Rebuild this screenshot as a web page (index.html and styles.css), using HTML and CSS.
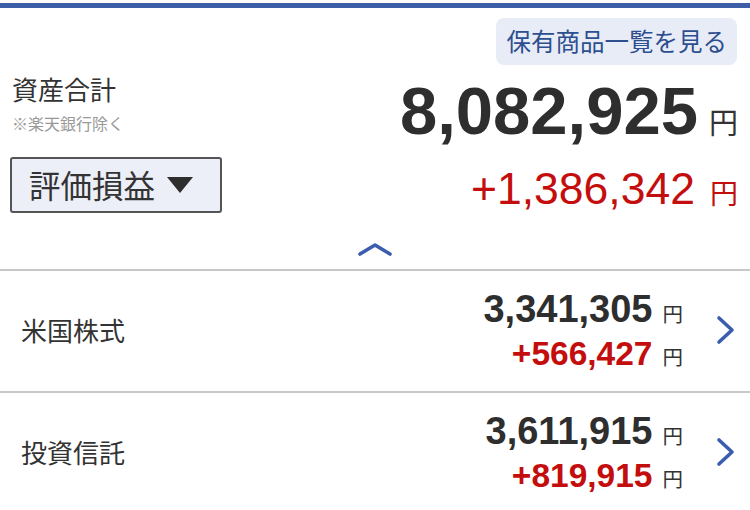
FILE: index.html
```html
<!DOCTYPE html>
<html lang="ja">
<head>
<meta charset="utf-8">
<link rel="stylesheet" href="styles.css">
</head>
<body>
<div class="topbar"></div>
<section class="summary">
  <div class="actions">
    <a class="btn-list">保有商品一覧を見る</a>
  </div>
  <div class="total-row">
    <div class="label">
      <div class="title">資産合計</div>
      <div class="note">※楽天銀行除く</div>
    </div>
    <div class="total"><span class="num">8,082,925</span><span class="yen">円</span></div>
  </div>
  <div class="pl-row">
    <div class="select"><span class="select-text">評価損益</span><span class="tri"></span></div>
    <div class="pl"><span class="num">+1,386,342</span><span class="yen">円</span></div>
  </div>
  <div class="collapse">
    <svg width="34" height="14" viewBox="0 0 34 14"><path d="M2 12 L17 3 L32 12" fill="none" stroke="#3a5dae" stroke-width="3.6" stroke-linecap="round" stroke-linejoin="round"/></svg>
  </div>
</section>
<ul class="list">
  <li class="row">
    <div class="row-name">米国株式</div>
    <div class="amounts">
      <div class="val"><span class="num">3,341,305</span><span class="yen">円</span></div>
      <div class="gain"><span class="num">+566,427</span><span class="yen">円</span></div>
    </div>
    <svg class="chev" width="20" height="30" viewBox="0 0 20 30"><path d="M3 3 L16 15 L3 27" fill="none" stroke="#3a5dae" stroke-width="3.6" stroke-linecap="round" stroke-linejoin="round"/></svg>
  </li>
  <li class="row">
    <div class="row-name">投資信託</div>
    <div class="amounts">
      <div class="val"><span class="num">3,611,915</span><span class="yen">円</span></div>
      <div class="gain"><span class="num">+819,915</span><span class="yen">円</span></div>
    </div>
    <svg class="chev" width="20" height="30" viewBox="0 0 20 30"><path d="M3 3 L16 15 L3 27" fill="none" stroke="#3a5dae" stroke-width="3.6" stroke-linecap="round" stroke-linejoin="round"/></svg>
  </li>
</ul>
</body>
</html>
```

FILE: styles.css
```css
* { box-sizing: border-box; }
html, body { margin: 0; padding: 0; background: #fff; }
body {
  font-family: "Noto Sans CJK JP", "Noto Sans", sans-serif;
  color: #333;
  width: 750px;
  overflow: hidden;
}
.topbar {
  margin-top: 3px;
  height: 5px;
  background: #3b5ea7;
}
.summary {
  padding: 0 12px 0 12px;
}
.actions {
  display: flex;
  justify-content: flex-end;
  padding-top: 10px;
  padding-right: 1px;
}
.btn-list {
  display: flex;
  align-items: center;
  height: 47px;
  padding: 0 10px 0 11px;
  background: #e8ecf6;
  border-radius: 8px;
  color: #2d4e8f;
  font-size: 24.5px;
  line-height: 1;
}
.total-row {
  display: flex;
  justify-content: space-between;
  align-items: flex-start;
  margin-top: 9px;
}
.title {
  font-size: 26px;
  line-height: 30px;
  color: #333;
}
.note {
  font-size: 16px;
  line-height: 20px;
  margin-top: 9px;
  color: #999;
}
.num {
  font-family: "Liberation Sans", Arial, sans-serif;
  line-height: 1;
}
.yen {
  font-family: "Noto Sans CJK JP", sans-serif;
  line-height: 1;
}
.total {
  display: flex;
  align-items: baseline;
  padding-top: 3px;
}
.total .num {
  font-size: 67px;
  font-weight: bold;
  color: #2e2e2e;
}
.total .yen {
  font-size: 29px;
  margin-left: 11px;
  color: #333;
}
.pl-row {
  display: flex;
  justify-content: space-between;
  align-items: flex-start;
  margin-top: 13px;
}
.select {
  display: flex;
  align-items: center;
  height: 56px;
  margin-left: -2px;
  padding: 0 27px 0 17px;
  background: #eceef8;
  border: 2px solid #555;
  border-radius: 3px;
}
.select-text {
  font-size: 31.5px;
  line-height: 1;
  color: #333;
}
.tri {
  width: 0;
  height: 0;
  margin-left: 12px;
  border-left: 13.5px solid transparent;
  border-right: 13.5px solid transparent;
  border-top: 16px solid #2e2e2e;
}
.pl {
  display: flex;
  align-items: baseline;
  padding-top: 10px;
  color: #c40d0d;
}
.pl .num {
  font-size: 44.5px;
}
.pl .yen {
  font-size: 28px;
  margin-left: 15px;
  color: #c40d0d;
}
.collapse {
  display: flex;
  justify-content: center;
  height: 56px;
  padding-top: 29px;
}
.list {
  list-style: none;
  margin: 0;
  padding: 0;
  border-top: 2px solid #c8c8c8;
}
.row {
  display: flex;
  align-items: center;
  height: 122px;
  padding: 0 14px 2px 21px;
  border-bottom: 2px solid #c8c8c8;
}
.row-name {
  flex: 1;
  font-size: 26px;
  line-height: 1;
  color: #333;
}
.amounts {
  display: flex;
  flex-direction: column;
  align-items: flex-end;
  gap: 9px;
}
.val, .gain {
  display: flex;
  align-items: baseline;
}
.val .num {
  font-size: 38px;
  font-weight: bold;
  color: #2e2e2e;
}
.gain .num {
  font-size: 33.5px;
  font-weight: bold;
  color: #c40d0d;
}
.val .yen, .gain .yen {
  font-size: 20.5px;
  margin-left: 10px;
  color: #333;
}
.chev {
  margin-left: 33px;
}
```
